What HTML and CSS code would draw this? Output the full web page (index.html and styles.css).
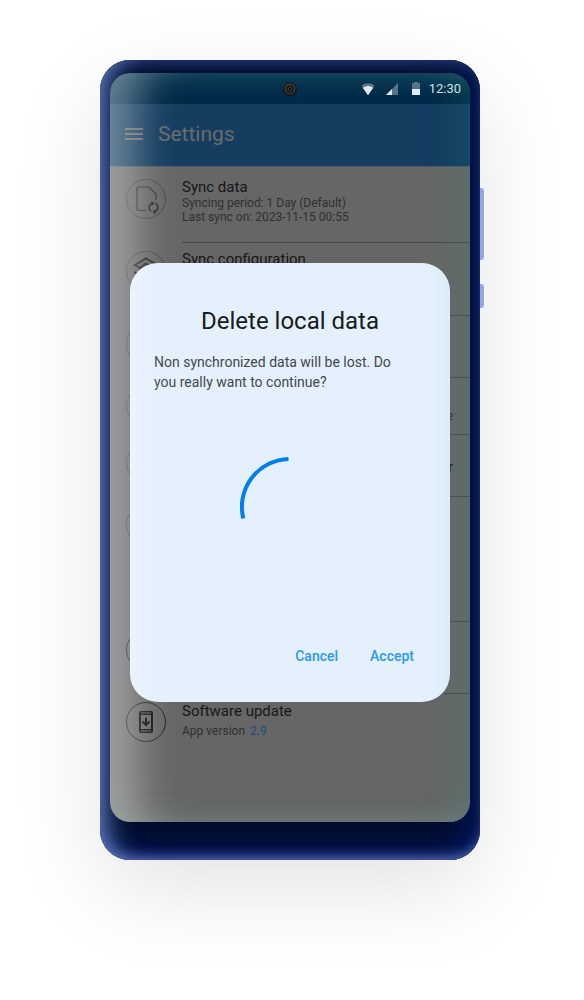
FILE: index.html
```html
<!DOCTYPE html>
<html lang="en">
<head>
<meta charset="utf-8">
<meta name="viewport" content="width=device-width, initial-scale=1">
<title>Settings</title>
<link rel="stylesheet" href="styles.css">
</head>
<body>
<div class="phone">
  <span class="side-key volume"></span>
  <span class="side-key power"></span>
  <div class="screen">
    <div class="status">
      <svg class="camera" width="16" height="16" viewBox="0 0 16 16"><circle cx="8" cy="8" r="7.2" fill="#141516"/><circle cx="8" cy="8" r="4.600" fill="#111" stroke="#34312e" stroke-width="1.8"/><circle cx="8" cy="8" r="1.800" fill="#070707" stroke="#3d3935"/></svg>
      <div class="indicators">
        <svg class="wifi" width="14" height="14" viewBox="0 0 14 14"><path d="M.4 3.500A10.600 10.600 0 0 1 13.600 3.500L7 13.200Z" fill="#557188"/><path d="M1.800 5.800A8 8 0 0 1 12.200 5.800L7 13.200Z" fill="#e4eaf1"/></svg>
        <svg class="signal" width="12" height="14" viewBox="0 0 12 14"><path d="M12 1V13H0Z" fill="#557188"/><path d="M6 7V13H0Z" fill="#e4eaf1"/></svg>
        <svg class="battery" width="8" height="14" viewBox="0 0 8 14"><path d="M2 0H6V1H8V7H0V1H2Z" fill="#557188"/><path d="M0 7H8V13H0Z" fill="#e4eaf1"/></svg>
        <time>12:30</time>
      </div>
    </div>
    <header class="app-bar">
      <button class="menu" aria-label="Menu"><svg width="18" height="12" viewBox="0 0 18 12"><path d="M0 1H18M0 6H18M0 11H18" stroke="#6c6965" stroke-width="2"/></svg></button>
      <h1>Settings</h1>
    </header>
    <main class="list">
      <section class="row">
        <svg class="icon" viewBox="0 0 40 40"><circle class="ring dotted" cx="20" cy="20" r="19.5"/><path class="thin" d="M20.500 31.500H12.500Q11 31.500 11 30V9.500Q11 8 12.500 8H23L30 15V21"/><path class="arrows" d="M25.200 32.500A4.800 4.800 0 0 1 24.600 25L26.500 24.500M29.300 24.200A4.800 4.800 0 0 1 30.500 31.800L28.500 33"/><path class="head" d="M25.500 22L28.500 24.300L25.500 27ZM29.500 30.300V35.500L26.500 33Z"/></svg>
        <div class="text">
          <h2>Sync data</h2>
          <p>Syncing period: 1 Day (Default)</p>
          <p>Last sync on: 2023-11-15 00:55</p>
        </div>
      </section>
      <section class="row roomy">
        <svg class="icon" viewBox="0 0 40 40"><circle class="ring dotted" cx="20" cy="20" r="19.5"/><path class="bold" d="M9 14L20 7.500L31 14L20 20.500ZM13 17.500L20 12.500L27 17.500M8 21L20 27L32 21"/></svg>
        <div class="text"><h2>Sync configuration</h2></div>
      </section>
      <section class="row compact">
        <svg class="icon" viewBox="0 0 40 40"><circle class="ring dotted" cx="20" cy="20" r="19.5"/></svg>
        <div class="text"></div>
      </section>
      <section class="row short">
        <svg class="icon" viewBox="0 0 40 40"><circle class="ring dotted" cx="20" cy="20" r="19.5"/></svg>
        <div class="text note"><p>Values reserved on this device</p></div>
      </section>
      <section class="row compact">
        <svg class="icon" viewBox="0 0 40 40"><circle class="ring dotted" cx="20" cy="20" r="19.5"/></svg>
        <div class="text action"><h2>Open sync error viewer</h2></div>
      </section>
      <section class="row tall">
        <svg class="icon" viewBox="0 0 40 40"><circle class="ring dotted" cx="20" cy="20" r="19.5"/></svg>
        <div class="text"></div>
      </section>
      <section class="row">
        <svg class="icon" viewBox="0 0 40 40"><circle class="ring" cx="20" cy="20" r="19.5"/></svg>
        <div class="text"></div>
      </section>
      <section class="row last">
        <svg class="icon" viewBox="0 0 40 40"><circle class="ring" cx="20" cy="20" r="19.5"/><path fill="#111" fill-rule="evenodd" d="M15 9H25Q27 9 27 11V29Q27 31 25 31H15Q13 31 13 29V11Q13 9 15 9ZM15 13V27H25V13ZM15 10.500V11.500H25V10.500ZM15 28.500V29.500H25V28.500Z"/><path d="M20 15.500V23M16.500 19.500L20 23L23.500 19.500" fill="none" stroke="#111" stroke-width="2"/></svg>
        <div class="text"><h2>Software update</h2><p class="version">App version <a href="#">2.9</a></p></div>
      </section>
    </main>
    <div class="overlay">
      <div class="dialog" role="dialog" aria-labelledby="dialog-title">
        <h2 id="dialog-title">Delete local data</h2>
        <p>Non synchronized data will be lost. Do you really want to continue?</p>
        <div class="progress"><svg width="100" height="100" viewBox="0 0 100 100"><path d="M3.300 61.500A48 48 0 0 1 48.500 2" fill="none" stroke="#007ff2" stroke-width="4"/></svg></div>
        <div class="actions"><button>Cancel</button><button>Accept</button></div>
      </div>
    </div>
    <div class="sheen"></div>
  </div>
</div>
</body>
</html>
```
FILE: styles.css
```css
* { box-sizing: border-box; }
body {
  margin: 0;
  padding: 60px 104px 140px 100px;
  background: #fff;
  font-family: Roboto, "Liberation Sans", sans-serif;
}
h1, h2, p { margin: 0; font-weight: 400; }
button { border: 0; padding: 0; background: none; font: inherit; }
svg { display: block; flex: none; }

.phone {
  position: relative;
  padding: 13px 10px 38px;
  border-radius: 30px;
  background: #000d2e;
  box-shadow:
    inset 20px 0 24px -12px #5c76b4,
    inset 0 -8px 14px -7px #6a7bc6,
    inset 0 13px 14px -7px #14265a,
    inset 0 -24px 28px -14px #001660,
    inset -28px 0 28px -14px #001854,
    0 30px 90px rgba(0, 0, 0, .11);
}
.side-key {
  position: absolute;
  left: 100%;
  width: 4px;
  border-radius: 0 3px 3px 0;
  background: #97a6d8;
}
.volume { top: 128px; height: 72px; }
.power { top: 224px; height: 24px; }

.screen {
  position: relative;
  overflow: hidden;
  border-radius: 20px;
  background: #666;
}
.status {
  display: grid;
  grid-template-columns: 1fr auto 1fr;
  align-items: center;
  height: 31px;
  padding: 0 9px;
  background: #002a49;
}
.camera { grid-column: 2; }
.indicators {
  grid-column: 3;
  display: flex;
  align-items: center;
  justify-content: flex-end;
  color: #dbe4eb;
  font-size: 13px;
  line-height: 16px;
}
.wifi { margin-right: 11px; }
.signal { margin-right: 14px; }
.battery { margin-right: 9px; }

.app-bar {
  display: flex;
  align-items: center;
  gap: 15px;
  height: 62px;
  padding: 0 15px 2px;
  background: #143d60;
}
.app-bar h1 { color: #696c6e; font-size: 21px; line-height: 24px; }

.list { padding-top: 4px; border-top: 1px solid #505963; }
.row {
  display: flex;
  gap: 16px;
  min-height: 72px;
  padding-left: 16px;
}
.roomy { min-height: 73px; }
.compact { min-height: 62px; }
.short { min-height: 57px; }
.tall { min-height: 125px; }
.last { min-height: 128px; }
.icon { width: 40px; height: 40px; margin-top: 8px; }
.ring { fill: none; stroke: #242424; }
.dotted { stroke: #2c2c2c; stroke-dasharray: 1 1; }
.thin { fill: none; stroke: #353535; stroke-width: 1.2; }
.bold { fill: none; stroke: #292929; stroke-width: 2; }
.arrows { fill: none; stroke: #292929; stroke-width: 1.4; }
.head { fill: #292929; }
.text {
  flex: 1;
  padding-top: 8px;
  border-bottom: 1px solid #4b4b4b;
  color: #303030;
  font-size: 12px;
  line-height: 14px;
}
.text h2 { color: #161616; font-size: 15px; line-height: 17px; }
.last .text { padding-top: 9px; border-bottom: 0; }
.note { padding: 31px 17px 0 0; text-align: right; }
.action { padding: 24px 17px 0 0; text-align: right; }
.text .version { padding-top: 4px; }
.version a { margin-left: 2px; color: #1c4b76; text-decoration: none; }

.overlay {
  position: absolute;
  inset: 0;
  padding: 190px 20px 0;
}
.dialog {
  padding: 42px 24px 26px;
  border-radius: 28px;
  background: #e5f0fd;
}
.dialog h2 {
  color: #181c20;
  font-size: 24px;
  line-height: 32px;
  text-align: center;
}
.dialog p {
  padding: 15px 16px 0 0;
  color: #42474e;
  font-size: 14px;
  line-height: 20px;
}
.progress { display: flex; justify-content: center; padding: 65px 0 79px; }
.actions {
  display: flex;
  justify-content: flex-end;
  gap: 32px;
  padding: 0 12px;
}
.actions button {
  color: #2998f3;
  font-size: 14px;
  font-weight: 500;
  line-height: 40px;
}
.sheen {
  position: absolute;
  inset: 0;
  border-radius: inherit;
  pointer-events: none;
  box-shadow:
    inset 47px 0 40px -20px rgba(255, 255, 255, .38),
    inset -34px 0 30px -15px rgba(50, 170, 150, .11),
    inset 0 -20px 24px -12px rgba(80, 190, 180, .1),
    inset 0 20px 24px -12px rgba(80, 190, 180, .12);
}
```
